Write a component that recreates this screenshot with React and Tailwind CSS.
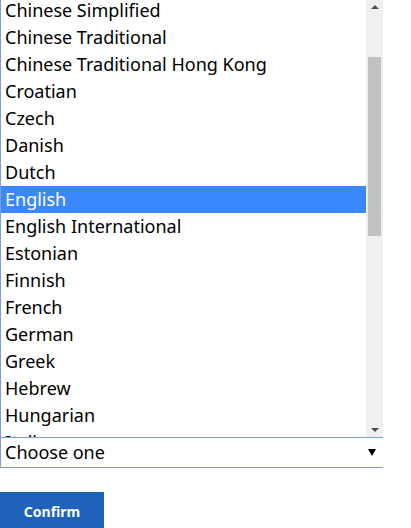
import React from "react";

const languages = [
  "Chinese Simplified",
  "Chinese Traditional",
  "Chinese Traditional Hong Kong",
  "Croatian",
  "Czech",
  "Danish",
  "Dutch",
  "English",
  "English International",
  "Estonian",
  "Finnish",
  "French",
  "German",
  "Greek",
  "Hebrew",
  "Hungarian",
  "Italian",
];

export default function App() {
  const selected = "English";

  return (
    <div className="w-[411px] h-[528px] bg-white overflow-hidden font-['Noto_Sans',sans-serif] text-black">
      {/* open list box */}
      <div className="flex w-[383px] h-[438px] border-l border-b border-[#7f9ddb] overflow-hidden">
        <div className="flex-1 overflow-hidden">
          <div className="-mt-[3px]">
            {languages.map((lang) => (
              <div
                key={lang}
                className={
                  "h-[27px] pl-1 leading-[27px] text-[18px] whitespace-nowrap " +
                  (lang === selected ? "bg-[#3a88fd] text-white" : "")
                }
              >
                {lang}
              </div>
            ))}
          </div>
        </div>

        {/* scrollbar */}
        <div className="w-[17px] bg-[#f0f0f0] flex flex-col items-center">
          <div className="h-[14px] flex items-center justify-center">
            <div className="w-0 h-0 border-l-[4px] border-r-[4px] border-b-[4px] border-l-transparent border-r-transparent border-b-[#505050]" />
          </div>
          <div className="mt-[43px] w-[13px] h-[179px] bg-[#c1c1c1]" />
          <div className="flex-1" />
          <div className="h-[15px] flex items-center justify-center">
            <div className="w-0 h-0 border-l-[4px] border-r-[4px] border-t-[4px] border-l-transparent border-r-transparent border-t-[#505050]" />
          </div>
        </div>
      </div>

      {/* closed select */}
      <div className="flex items-center justify-between w-[383px] h-[30px] border-l border-b border-[#7f9ddb] pl-1 pr-[7px]">
        <span className="text-[18px]">Choose one</span>
        <div className="w-0 h-0 border-l-[4px] border-r-[4px] border-t-[7px] border-l-transparent border-r-transparent border-t-black" />
      </div>

      <button className="mt-[24px] w-[104px] h-[38px] bg-[#1f62bc] text-white text-[14px] font-bold flex items-center justify-center">
        Confirm
      </button>
    </div>
  );
}
